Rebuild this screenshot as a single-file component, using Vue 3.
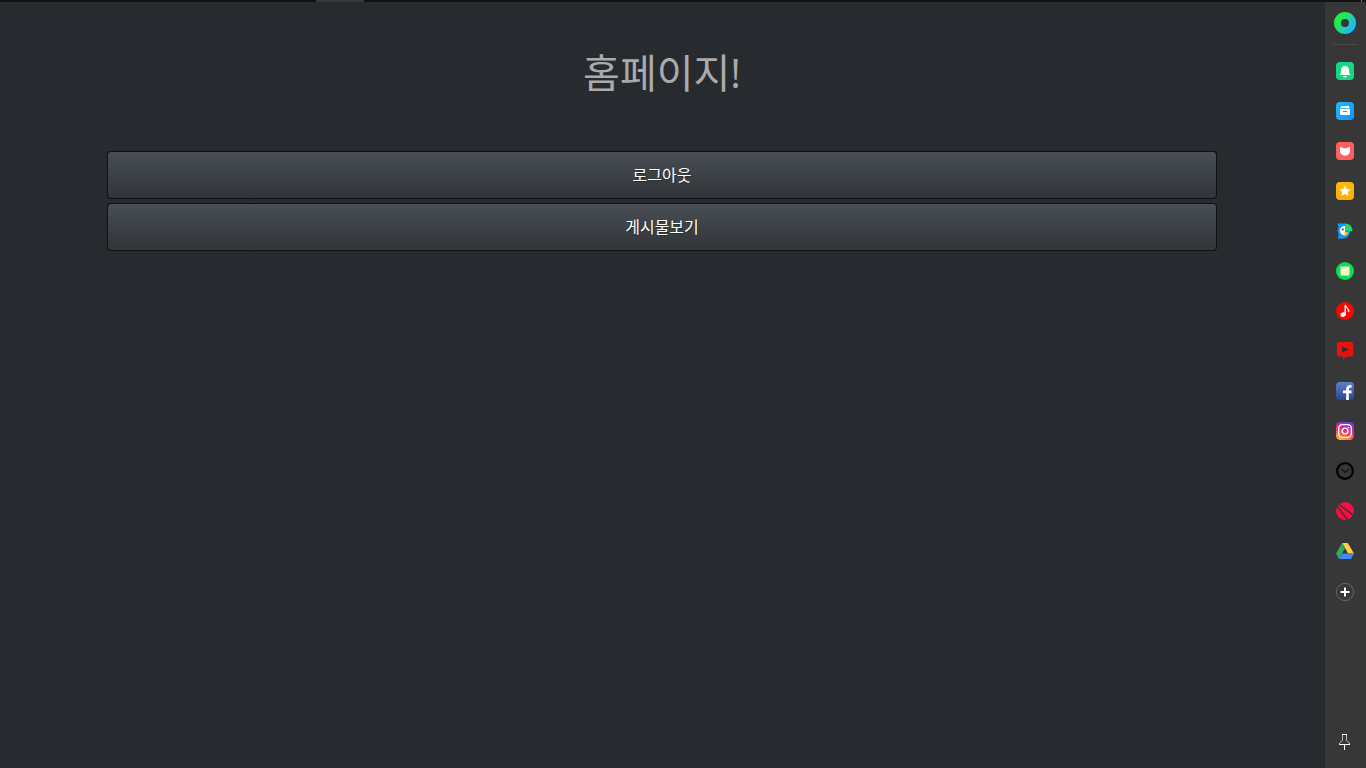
<template>
  <div class="browser">
    <div class="tab-strip">
      <span class="active-tab"></span>
      <span class="tab-mark"></span>
    </div>
    <div class="body">
      <main class="page">
        <div class="container">
          <h1 class="title">홈페이지!</h1>
          <div class="buttons">
            <button v-for="label in menus" :key="label" type="button" class="btn">{{ label }}</button>
          </div>
        </div>
      </main>

      <aside class="sidebar">
        <button type="button" class="side-btn side-top" aria-label="사이드바">
          <svg width="22" height="22" viewBox="0 0 22 22">
            <defs>
              <linearGradient id="ring" x1="0.1" y1="0.2" x2="0.9" y2="0.8">
                <stop offset="0.15" stop-color="#1fec4a" />
                <stop offset="0.55" stop-color="#1fd6a0" />
                <stop offset="1" stop-color="#1cbcf2" />
              </linearGradient>
            </defs>
            <circle cx="11" cy="11" r="7.5" fill="none" stroke="url(#ring)" stroke-width="7" />
          </svg>
        </button>
        <hr class="divider" />
        <nav class="side-list">
          <button v-for="icon in icons" :key="icon.name" type="button" class="side-btn" :aria-label="icon.name">
            <svg width="18" height="18" viewBox="0 0 18 18" v-html="icon.svg"></svg>
          </button>
          <button type="button" class="side-btn" aria-label="추가">
            <svg width="20" height="20" viewBox="0 0 20 20">
              <circle cx="10" cy="11" r="8.6" fill="none" stroke="#686868" />
              <path d="M10 6.5v9M5.5 11h9" stroke="#fff" stroke-width="2" />
            </svg>
          </button>
        </nav>
        <button type="button" class="side-btn side-pin" aria-label="고정">
          <svg width="18" height="18" viewBox="0 0 18 18" fill="none">
            <path d="M6.5 2v5.500L3.500 10v1.500M10.500 2v5.500L13.500 10v1.500" stroke="#b8b8b8" />
            <path d="M6 1.500h5M3 11.500h11M8.500 12v5" stroke="#fff" />
          </svg>
        </button>
      </aside>
    </div>
  </div>
</template>

<script setup>
const menus = ["로그아웃", "게시물보기"];

// 사이드바 아이콘
const icons = [
  {
    name: "알림",
    svg: `<rect width="18" height="18" rx="4" fill="#15d882"/>
      <path d="M9 4C6.500 4 5 5.700 5 8v3l-1.200 1.500v.5h10.400v-.5L13 11V8c0-2.300-1.500-4-4-4z" fill="#fff"/>
      <path d="M7 14h4c-.3 1-1 1.400-2 1.400S7.300 15 7 14z" fill="#fff"/>`,
  },
  {
    name: "보관함",
    svg: `<defs><linearGradient id="box" x1="0" x2="1" y2="1"><stop stop-color="#20b6ff"/><stop offset="1" stop-color="#1694f7"/></linearGradient></defs>
      <rect width="18" height="18" rx="4" fill="url(#box)"/>
      <path d="M5.500 4h7L14 6.200H4zM4 7h10v4.500a1.500 1.500 0 0 1-1.500 1.500h-7A1.500 1.500 0 0 1 4 11.500z" fill="#fff"/>
      <path d="M7 9.500h4" stroke="#1b9dfb"/>`,
  },
  {
    name: "포켓",
    svg: `<rect width="18" height="18" rx="4" fill="#ff605f"/>
      <path d="M4 5c1 0 2 .3 2.800 1 .8.500 3.600.500 4.400 0 .8-.7 1.800-1 2.800-1v3.500c0 3-2 5.200-5 5.200S4 11.500 4 8.500z" fill="#fff"/>`,
  },
  {
    name: "즐겨찾기",
    svg: `<defs><linearGradient id="fav" x2="0" y2="1"><stop stop-color="#ffb90d"/><stop offset="1" stop-color="#fcae05"/></linearGradient></defs>
      <rect width="18" height="18" rx="4" fill="url(#fav)"/>
      <path d="M9 3.400l1.700 3.600 4 .4-3 2.700.9 4L9 12.100l-3.600 2 .9-4-3-2.700 4-.4z" fill="#fff"/>`,
  },
  {
    name: "파파고",
    svg: `<path d="M1.500 1.500H9c3 1 5 3.500 5 7.500 0 4.500-3 7.500-7 7.500H1.500l1.200-3L1.500 8l1-3.500z" fill="#0b9bff"/>
      <path d="M9 1.500c4.500 0 7.500 3 7.500 7.500H9z" fill="#20d56b"/>
      <path d="M9 4C6 4 4 6 4 8.700c0 2.600 2 4.600 5 4.600z" fill="#fff"/>
      <circle cx="6.800" cy="7.500" r="1.100" fill="#444"/>
      <path d="M8.500 10H12c0 2-1 3.800-3.500 3.800z" fill="#ffc11e"/>`,
  },
  {
    name: "라인",
    svg: `<circle cx="9" cy="9" r="9" fill="#08df52"/>
      <rect x="4.500" y="4.500" width="9" height="9" fill="#fff3ce"/>`,
  },
  {
    name: "음악",
    svg: `<circle cx="9" cy="9" r="9" fill="#fb0505"/>
      <ellipse cx="7.200" cy="12.600" rx="2.700" ry="2.200" transform="rotate(-25 7.200 12.600)" fill="#fff"/>
      <path d="M9.200 12.500V3c.5 2.500 4.200 3 3.300 7" fill="none" stroke="#fff" stroke-width="1.300"/>`,
  },
  {
    name: "동영상",
    svg: `<path d="M2.500 0h13Q17 .5 17.300 2v10.500Q17 14 15.500 14.500H10.500L7 17.500v-3H2.500Q1 14 .8 12.500V2Q1 .5 2.500 0z" fill="#e91010"/>
      <path d="M6 4.500l7 3-7 3z" fill="#332d2d"/>`,
  },
  {
    name: "페이스북",
    svg: `<defs><linearGradient id="fb" x2="0" y2="1"><stop stop-color="#5d80c8"/><stop offset="1" stop-color="#29478b"/></linearGradient></defs>
      <rect width="18" height="18" rx="4" fill="url(#fb)"/>
      <path d="M11.500 18V7.500c0-2.200 1-3.200 2.700-3.200h1.300M7 9.800h8.500" fill="none" stroke="#fff" stroke-width="2.700"/>`,
  },
  {
    name: "인스타그램",
    svg: `<defs>
        <linearGradient id="ig" x1="0.2" y1="1" x2="0.6" y2="0"><stop stop-color="#ffc447"/><stop offset=".3" stop-color="#f9643b"/><stop offset=".6" stop-color="#df2c8b"/><stop offset="1" stop-color="#763bd0"/></linearGradient>
      </defs>
      <rect width="18" height="18" rx="4.500" fill="url(#ig)"/>
      <rect x="2.700" y="2.700" width="12.600" height="12.600" rx="3.500" fill="none" stroke="#fff" stroke-width="1.300"/>
      <circle cx="9" cy="9" r="2.900" fill="none" stroke="#fff" stroke-width="1.400"/>
      <circle cx="12.500" cy="5.500" r=".8" fill="#fff"/>`,
  },
  {
    name: "시계",
    svg: `<circle cx="9" cy="9" r="7.900" fill="none" stroke="#000" stroke-width="2.200"/>
      <path d="M5.500 7L9 10.500l4-3.500" fill="none" stroke="#111" stroke-width="1.200"/>`,
  },
  {
    name: "왓챠",
    svg: `<circle cx="9" cy="9" r="9" fill="#ff0b43"/>
      <path d="M1 4l10.500 14M3 2.500l14 10.300" stroke="#373737" stroke-width="1.500"/>`,
  },
  {
    name: "드라이브",
    svg: `<path d="M6.300 1h5.500L18 11.500h-6z" fill="#ffcd40"/>
      <path d="M6 1l3 5.300L3 17l-3-5.500z" fill="#2eaa63"/>
      <path d="M6.200 11.500H18L15 17H3z" fill="#4586f3"/>`,
  },
];
</script>

<style>
body {
  margin: 0;
  background: #272b30;
}
</style>

<style scoped>
.browser {
  min-height: 100vh;
  display: flex;
  flex-direction: column;
  background: #272b30;
  font-family: "Noto Sans CJK KR", "Noto Sans", sans-serif;
}
.tab-strip {
  display: flex;
  justify-content: space-between;
  height: 2px;
  padding: 0 4px 0 316px;
  background: #111;
}
.active-tab {
  width: 48px;
  background: #373737;
}
.tab-mark {
  width: 1px;
  background: #777;
}
.body {
  flex: 1;
  display: flex;
}
.page {
  flex: 1;
  padding: 0 16px 0 15px;
}
.container {
  max-width: 1110px;
  margin: 0 auto;
}
.title {
  margin: 0;
  padding: 44px 0 52px;
  color: #aaa;
  font-family: "Open Sans", "Noto Sans CJK KR", sans-serif;
  font-size: 40px;
  font-weight: 400;
  line-height: 53px;
  text-align: center;
}
.buttons {
  display: flex;
  flex-direction: column;
  gap: 4px;
}
.btn {
  width: 100%;
  height: 48px;
  padding: 0 16px 2px;
  border: 1px solid rgba(0, 0, 0, 0.6);
  border-radius: 4px;
  background: linear-gradient(#484e55, #3a3f44 60%, #313539);
  background-clip: padding-box;
  color: #fff;
  font-family: inherit;
  font-size: 16px;
  line-height: 24px;
  text-shadow: 1px 1px 1px rgba(0, 0, 0, 0.3);
  cursor: pointer;
}
.btn:hover {
  background: #313539;
}

/* 사이드바 */
.sidebar {
  display: flex;
  flex-direction: column;
  width: 40px;
  padding-right: 1px;
  background: #373737;
}
.side-btn {
  display: flex;
  align-items: center;
  justify-content: center;
  width: 40px;
  height: 40px;
  padding: 0;
  border: none;
  background: none;
  cursor: pointer;
}
.side-top {
  height: 42px;
}
.divider {
  width: 24px;
  height: 1px;
  margin: 0 auto 6px;
  border: none;
  background: #4a4a4a;
}
.side-list {
  flex: 1;
}
.side-pin {
  margin-bottom: 6px;
}
</style>
